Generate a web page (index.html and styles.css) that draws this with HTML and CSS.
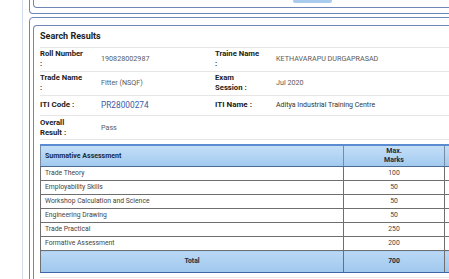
FILE: index.html
```html
<!DOCTYPE html>
<html>
<head>
<meta charset="utf-8">
<link rel="stylesheet" href="styles.css">
</head>
<body>
<div class="page">
  <div class="frame">
    <div class="panel panel-top">
      <div class="panel-inner top-inner"><span class="btn"></span></div>
    </div>
    <div class="panel panel-main">
      <div class="panel-inner main-inner">
        <h2 class="title">Search Results</h2>
        <div class="info">
          <div class="info-row r1">
            <div class="lbl">Roll Number<br>:</div>
            <div class="val">190828002987</div>
            <div class="lbl">Traine Name<br>:</div>
            <div class="val">KETHAVARAPU DURGAPRASAD</div>
          </div>
          <div class="info-row r2">
            <div class="lbl">Trade Name<br>:</div>
            <div class="val">Fitter (NSQF)</div>
            <div class="lbl">Exam<br>Session :</div>
            <div class="val">Jul 2020</div>
          </div>
          <div class="info-row r3">
            <div class="lbl lbl-lg">ITI Code :</div>
            <div class="val code">PR28000274</div>
            <div class="lbl lbl-lg">ITI Name :</div>
            <div class="val dark">Aditya Industrial Training Centre</div>
          </div>
          <div class="info-row r4">
            <div class="lbl">Overall<br>Result :</div>
            <div class="val">Pass</div>
            <div></div>
            <div></div>
          </div>
        </div>
        <table class="marks">
          <colgroup>
            <col class="c1"><col class="c2"><col class="c3">
          </colgroup>
          <thead>
            <tr>
              <th class="left">Summative Assessment</th>
              <th>Max.<br>Marks</th>
              <th></th>
            </tr>
          </thead>
          <tbody>
            <tr><td>Trade Theory</td><td class="num">100</td><td></td></tr>
            <tr><td>Employability Skills</td><td class="num">50</td><td></td></tr>
            <tr><td>Workshop Calculation and Science</td><td class="num">50</td><td></td></tr>
            <tr><td>Engineering Drawing</td><td class="num">50</td><td></td></tr>
            <tr><td>Trade Practical</td><td class="num">250</td><td></td></tr>
            <tr><td>Formative Assessment</td><td class="num">200</td><td></td></tr>
          </tbody>
          <tfoot>
            <tr><td class="total">Total</td><td class="total">700</td><td class="total"></td></tr>
          </tfoot>
        </table>
        <div class="after"></div>
      </div>
    </div>
  </div>
</div>
</body>
</html>
```

FILE: styles.css
```css
html, body {
  margin: 0;
  padding: 0;
  background: #ffffff;
  overflow: hidden;
}
body {
  width: 449px;
  height: 279px;
  font-family: Roboto, "Liberation Sans", Arial, sans-serif;
}
.page {
  padding-left: 22px;
  width: 560px;
}
.frame {
  border-left: 1px solid #cfdaea;
  padding-left: 6px;
  height: 300px;
}
.panel {
  border: 1px solid #6f86b9;
  border-radius: 4px;
  padding: 0 3px;
}
.panel-inner {
  border: 1px solid #6f86b9;
  border-radius: 4px;
}
.panel-top {
  border-top: none;
  border-radius: 0 0 4px 4px;
  padding-bottom: 5px;
}
.top-inner {
  border-top: none;
  border-radius: 0 0 4px 4px;
  height: 7px;
  display: flex;
  align-items: flex-start;
}
.btn {
  display: block;
  width: 39px;
  height: 3px;
  margin-left: 259px;
  background: #a9cbee;
  border-radius: 0 0 2px 2px;
}
.panel-main {
  margin-top: 3px;
  padding-top: 7px;
}
.main-inner {
  border-bottom: none;
  border-radius: 4px 4px 0 0;
  padding: 4px 0 0 6px;
  height: 260px;
}
.title {
  margin: 0 0 5px;
  font-size: 9px;
  line-height: 12px;
  font-weight: bold;
  color: #222;
}
.info-row {
  display: grid;
  grid-template-columns: 61px 114px 61px 1fr;
  align-items: center;
  border-top: 1px solid #e6e6e6;
  line-height: 10px;
}
.r1, .r2 {
  padding: 1px 0 2px;
}
.r3 {
  padding: 4px 0 5px;
}
.r4 {
  padding: 2px 0 1px;
  border-bottom: 1px solid #e6e6e6;
}
.lbl {
  font-size: 7.7px;
  font-weight: bold;
  color: #222;
}
.lbl-lg {
  font-size: 8px;
}
.val {
  font-size: 7.2px;
  color: #5a5a5a;
}
.val.code {
  font-size: 8.3px;
  color: #3d5ba6;
}
.val.dark {
  font-size: 7px;
  color: #333;
}
.marks {
  margin-top: 4px;
  border-collapse: collapse;
  table-layout: fixed;
  width: 490px;
  font-size: 6.8px;
  color: #444;
}
.c1 { width: 303px; }
.c2 { width: 101px; }
.c3 { width: 86px; }
.marks th {
  height: 20px;
  padding: 0 4px;
  font-size: 7px;
  line-height: 9px;
  font-weight: bold;
  color: #1d2b3c;
  text-align: center;
  background: linear-gradient(#c3def7, #a2caef);
  border-top: 2px solid #5b8bd0;
  border-left: 1px solid #7a8aa0;
  border-right: 1px solid #7a8aa0;
  border-bottom: 1px solid #4d6a92;
}
.marks th.left {
  text-align: left;
}
.marks td {
  height: 13px;
  padding: 0 4px;
  line-height: 13px;
  border: 1px solid #6f6f6f;
  border-top: none;
  white-space: nowrap;
}
.marks td.num {
  text-align: center;
}
.marks td.total {
  height: 21px;
  text-align: center;
  font-weight: bold;
  color: #1d2b3c;
  background: linear-gradient(#b9d8f5, #a0c8ee);
  border-bottom: 1px solid #3d67aa;
}
.after {
  margin-top: 4px;
  border-top: 1px solid #e8e8e8;
}
```
